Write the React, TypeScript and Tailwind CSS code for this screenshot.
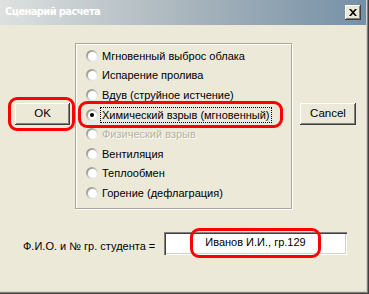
import React from "react";

const options = [
  { label: "Мгновенный выброс облака" },
  { label: "Испарение пролива" },
  { label: "Вдув (струйное истчение)" },
  { label: "Химический взрыв (мгновенный)", checked: true },
  { label: "Физический взрыв", disabled: true },
  { label: "Вентиляция" },
  { label: "Теплообмен" },
  { label: "Горение (дефлаграция)" },
];

function Radio({ checked = false }: { checked?: boolean }) {
  return (
    <svg width="12" height="12" viewBox="0 0 12 12" className="shrink-0">
      <defs>
        <linearGradient id="rim" x1="0" y1="0" x2="1" y2="1">
          <stop offset="0" stopColor="#7c7c7c" />
          <stop offset="0.55" stopColor="#d0d0c8" />
          <stop offset="1" stopColor="#ffffff" />
        </linearGradient>
      </defs>
      <circle cx="6" cy="6" r="6" fill="url(#rim)" />
      <circle cx="6.4" cy="6.4" r="4.4" fill="#ffffff" />
      {checked && <circle cx="6" cy="6" r="2" fill="#000000" />}
    </svg>
  );
}

function Button({ label }: { label: string }) {
  return (
    <div className="h-[22px] bg-[#ece9d8] shadow-[inset_-1px_-1px_0_#404040,inset_1px_1px_0_#ffffff,inset_-2px_-2px_0_#808080] flex items-center justify-center text-[11.5px] text-black">
      {label}
    </div>
  );
}

export default function App() {
  return (
    <div
      className="w-[369px] h-[294px] bg-[#ece9d8] flex flex-col relative overflow-hidden shadow-[inset_-1px_-1px_0_#404040,inset_-2px_-2px_0_#808080,inset_-3px_-3px_0_#d4d0c8]"
      style={{ fontFamily: '"Liberation Sans", Arial, sans-serif' }}
    >
      {/* title bar */}
      <div className="h-[25px] shrink-0 flex items-center justify-between pl-[5px] pr-[5px] bg-gradient-to-r from-[#dde1e0] via-[#aab6bd] to-[#7590a6] mr-[3px]">
        <span
          className="text-white font-bold text-[11px] tracking-[-0.6px]"
          style={{ fontFamily: '"Liberation Sans Narrow", "DejaVu Sans Condensed", Arial, sans-serif' }}
        >
          Сценарий расчета
        </span>
        <div className="w-[16px] h-[15px] bg-[#ece9d8] shadow-[inset_-1px_-1px_0_#404040,inset_1px_1px_0_#ffffff,inset_-2px_-2px_0_#808080] flex items-center justify-center">
          <svg width="8" height="7" viewBox="0 0 8 7">
            <path d="M0 0h2l2 2.2L6 0h2L5 3.5 8 7H6L4 4.8 2 7H0l3-3.5z" fill="#000" />
          </svg>
        </div>
      </div>

      {/* body */}
      <div className="flex pt-[18px]">
        <div className="w-[75px] pl-[15px] pr-[5px] pt-[60px]">
          <Button label="OK" />
        </div>

        <div className="w-[217px] h-[166px] border border-[#aca899] shadow-[inset_1px_1px_0_#ffffff,1px_1px_0_#ffffff] pt-[2px] text-[11px]">
          {options.map((o) => (
            <div key={o.label} className="h-[19.6px] flex items-center pl-[10px]">
              <Radio checked={o.checked} />
              <span
                className={
                  o.checked
                    ? "ml-[3px] px-[1px] outline outline-1 outline-dotted outline-black leading-[14px] text-black"
                    : o.disabled
                    ? "ml-[4px] text-[#b5b2a4] [text-shadow:1px_1px_0_#ffffff]"
                    : "ml-[4px] text-black"
                }
              >
                {o.label}
              </span>
            </div>
          ))}
        </div>

        <div className="w-[56px] ml-[8px] pt-[60px]">
          <Button label="Cancel" />
        </div>
      </div>

      {/* student row */}
      <div className="flex items-center mt-[23px] pl-[23px]">
        <span className="text-[11px] text-black w-[141px] whitespace-nowrap pt-[5px]">Ф.И.О. и № гр. студента =</span>
        <div className="w-[183px] h-[23px] bg-white shadow-[inset_1px_1px_0_#808080,inset_2px_2px_0_#404040,inset_-1px_-1px_0_#ffffff,inset_-2px_-2px_0_#d4d0c8] flex items-center justify-center text-[11px] text-black pb-[2px]">
          Иванов И.И., гр.129
        </div>
      </div>

      {/* red annotation rings */}
      <div className="absolute left-[8px] top-[97px] w-[67px] h-[34px] border-[3px] border-[#ff0000] rounded-[9px]" />
      <div className="absolute left-[78px] top-[101px] w-[205px] h-[27px] border-[3px] border-[#ff0000] rounded-[9px]" />
      <div className="absolute left-[190px] top-[228px] w-[131px] h-[30px] border-[3px] border-[#ff0000] rounded-[9px]" />
    </div>
  );
}
